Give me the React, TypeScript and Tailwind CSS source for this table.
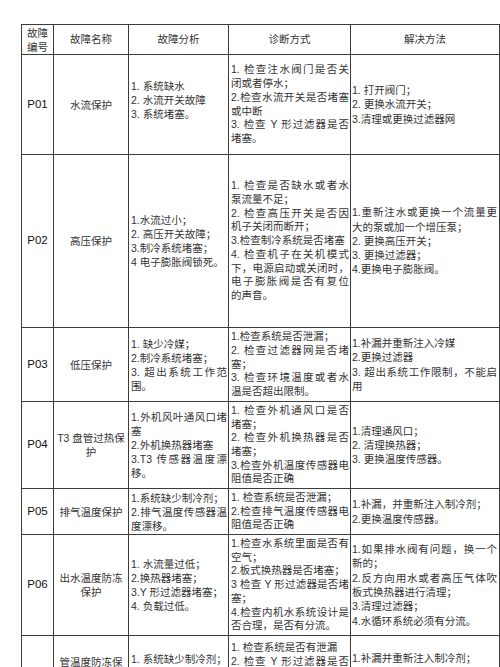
import React from "react";

type Row = {
  code: string;
  name: string[];
  analysis: string[];
  diag: string[];
  sol: string[];
  h: string;
  namePad?: string;
  anPad?: string;
  solPad?: string;
};

const rows: Row[] = [
  {
    code: "P01",
    h: "h-[100px]",
    anPad: "pb-[10px]",
    name: ["水流保护"],
    analysis: ["1. 系统缺水", "2. 水流开关故障", "3. 系统堵塞。"],
    diag: ["1. 检查注水阀门是否关", "闭或者停水；", "2.检查水流开关是否堵塞", "或中断", "3. 检查 Y 形过滤器是否", "堵塞。"],
    sol: ["1. 打开阀门；", "2. 更换水流开关；", "3.清理或更换过滤器网"],
  },
  {
    code: "P02",
    h: "h-[173px]",
    name: ["高压保护"],
    analysis: ["1.水流过小；", "2. 高压开关故障；", "3.制冷系统堵塞；", "4 电子膨胀阀锁死。"],
    diag: [
      "1. 检查是否缺水或者水",
      "泵流量不足；",
      "2. 检查高压开关是否因",
      "机子关闭而断开；",
      "3.检查制冷系统是否堵塞",
      "4. 检查机子在关机模式",
      "下，电源启动或关闭时，",
      "电子膨胀阀是否有复位",
      "的声音。",
    ],
    sol: ["1.重新注水或更换一个流量更", "大的泵或加一个增压泵；", "2. 更换高压开关；", "3. 更换过滤器；", "4.更换电子膨胀阀。"],
  },
  {
    code: "P03",
    h: "h-[74px]",
    name: ["低压保护"],
    analysis: ["1. 缺少冷媒；", "2.制冷系统堵塞；", "3. 超出系统工作范", "围。"],
    diag: ["1.检查系统是否泄漏；", "2. 检查过滤器网是否堵", "塞；", "3. 检查环境温度或者水", "温是否超出限制。"],
    sol: ["1.补漏并重新注入冷媒", "2.更换过滤器", "3. 超出系统工作限制，不能启", "用"],
  },
  {
    code: "P04",
    h: "h-[87px]",
    name: ["T3 盘管过热保", "护"],
    analysis: ["1.外机风叶通风口堵", "塞", "2.外机换热器堵塞", "3.T3 传感器温度漂", "移。"],
    diag: ["1. 检查外机通风口是否", "堵塞；", "2. 检查外机换热器是否", "堵塞；", "3.检查外机温度传感器电", "阻值是否正确"],
    sol: ["1.清理通风口；", "2. 清理换热器；", "3. 更换温度传感器。"],
  },
  {
    code: "P05",
    h: "h-[46px]",
    name: ["排气温度保护"],
    analysis: ["1.系统缺少制冷剂；", "2.排气温度传感器温", "度漂移。"],
    diag: ["1. 检查系统是否泄漏；", "2.检查排气温度传感器电", "阻值是否正确"],
    sol: ["1.补漏，并重新注入制冷剂；", "2.更换温度传感器。"],
  },
  {
    code: "P06",
    h: "h-[101px]",
    name: ["出水温度防冻", "保护"],
    analysis: ["1. 水流量过低；", "2.换热器堵塞；", "3.Y 形过滤器堵塞；", "4. 负载过低。"],
    diag: [
      "1.检查水系统里面是否有",
      "空气；",
      "2.板式换热器是否堵塞；",
      "3 检查 Y 形过滤器是否堵",
      "塞；",
      "4.检查内机水系统设计是",
      "否合理，是否有分流。",
    ],
    sol: ["1.如果排水阀有问题，换一个", "新的；", "2.反方向用水或者高压气体吹", "板式换热器进行清理；", "3.清理过滤器；", "4.水循环系统必须有分流。"],
  },
  {
    code: "P07",
    h: "h-[80px]",
    namePad: "pb-[14px]",
    anPad: "pb-[6px]",
    solPad: "pb-[6px]",
    name: ["管温度防冻保", "护"],
    analysis: ["1. 系统缺少制冷剂；", "2. Y 形过滤器堵塞；", "3. 水流量过小。"],
    diag: ["1. 检查系统是否有泄漏", "2. 检查 Y 形过滤器是否", "堵塞；", "3. 检查水流量是否过小", "4. 检查温度传感器。"],
    sol: ["1.补漏并重新注入制冷剂；", "2.清理过滤器；", "3.加大水流量。"],
  },
];

// a wrapped line (next line carries on, no new number) is spread full width
function Lines({ lines, leading }: { lines: string[]; leading: string }) {
  return (
    <div className={leading}>
      {lines.map((l, i) => {
        const next = lines[i + 1];
        const full = next !== undefined && !/^\d/.test(next);
        return (
          <div key={i} className={full ? "text-justify [text-align-last:justify]" : "text-left"}>
            {l}
          </div>
        );
      })}
    </div>
  );
}

const cell = "border border-[#3c3c3c] align-middle";

export default function App() {
  return (
    <div
      className="min-h-screen bg-white pt-[24px] pl-[21px] text-[10.5px] text-[#333]"
      style={{ fontFamily: '"Liberation Sans", "Noto Sans CJK SC", sans-serif' }}
    >
      <table className="table-fixed border-collapse w-[478px]">
        <colgroup>
          <col className="w-[32px]" />
          <col className="w-[75px]" />
          <col className="w-[100px]" />
          <col className="w-[122px]" />
          <col className="w-[149px]" />
        </colgroup>
        <thead>
          <tr>
            <td className={`${cell} h-[30px] text-center leading-[14px]`}>
              <div>故障</div>
              <div>编号</div>
            </td>
            <td className={`${cell} text-center`}>故障名称</td>
            <td className={`${cell} text-center`}>故障分析</td>
            <td className={`${cell} text-center`}>诊断方式</td>
            <td className={`${cell} text-center`}>解决方法</td>
          </tr>
        </thead>
        <tbody>
          {rows.map((r) => (
            <tr key={r.code}>
              <td className={`${cell} ${r.h} text-center text-[11.5px] text-[#111]`}>{r.code}</td>
              <td className={`${cell} text-center leading-[14px] ${r.namePad ?? ""}`}>
                {r.name.map((n, i) => (
                  <div key={i}>{n}</div>
                ))}
              </td>
              <td className={`${cell} pl-[2px] pr-[1px] ${r.anPad ?? ""}`}>
                <Lines lines={r.analysis} leading="leading-[14px]" />
              </td>
              <td className={`${cell} pl-[2px] pr-[1px]`}>
                <Lines lines={r.diag} leading="leading-[13.7px]" />
              </td>
              <td className={`${cell} pl-[1px] pr-[2px] ${r.solPad ?? ""}`}>
                <Lines lines={r.sol} leading="leading-[14.3px]" />
              </td>
            </tr>
          ))}
        </tbody>
      </table>
    </div>
  );
}
